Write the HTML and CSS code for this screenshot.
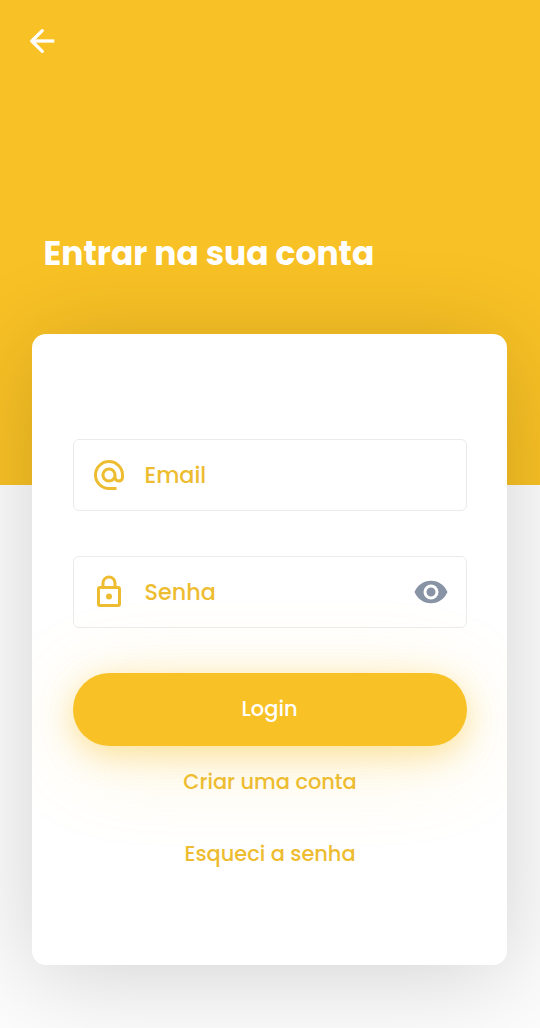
FILE: index.html
```html
<!DOCTYPE html>
<html lang="pt-BR">
<head>
<meta charset="utf-8">
<meta name="viewport" content="width=device-width, initial-scale=1">
<title>Entrar na sua conta</title>
<link rel="stylesheet" href="styles.css">
</head>
<body>
<main class="screen">
  <header class="hero">
    <button class="back" type="button" aria-label="Voltar">
      <svg class="icon" viewBox="0 0 24 24" fill="none" stroke="currentColor" stroke-width="2.2" stroke-linejoin="round"><path d="M20.2 12H5.5"/><path stroke-linecap="round" d="M12.2 5.1L5.2 12l7 6.9"/></svg>
    </button>
    <h1 class="title">Entrar na sua conta</h1>
  </header>
  <section class="card">
    <div class="field">
      <svg class="icon" viewBox="0 0 24 24" fill="currentColor"><path d="M12,15C12.81,15 13.5,14.7 14.11,14.11C14.7,13.5 15,12.81 15,12C15,11.19 14.7,10.5 14.11,9.89C13.5,9.3 12.81,9 12,9C11.19,9 10.5,9.3 9.89,9.89C9.3,10.5 9,11.19 9,12C9,12.81 9.3,13.5 9.89,14.11C10.5,14.7 11.19,15 12,15M12,2C14.75,2 17.1,3 19.05,4.95C21,6.9 22,9.25 22,12V13.45C22,14.45 21.65,15.3 21,16C20.3,16.67 19.5,17 18.5,17C17.3,17 16.31,16.5 15.56,15.5C14.56,16.5 13.38,17 12,17C10.63,17 9.45,16.5 8.46,15.54C7.5,14.55 7,13.38 7,12C7,10.63 7.5,9.45 8.46,8.46C9.45,7.5 10.63,7 12,7C13.37,7 14.55,7.5 15.54,8.46C16.5,9.45 17,10.63 17,12V13.45C17,13.86 17.16,14.22 17.46,14.53C17.76,14.84 18.11,15 18.5,15C18.92,15 19.27,14.84 19.57,14.53C19.87,14.22 20,13.86 20,13.45V12C20,9.81 19.23,7.93 17.65,6.35C16.07,4.77 14.19,4 12,4C9.81,4 7.93,4.77 6.35,6.35C4.77,7.93 4,9.81 4,12C4,14.19 4.77,16.07 6.35,17.65C7.93,19.23 9.81,20 12,20H17V22H12C9.25,22 6.9,21 4.95,19.05C3,17.1 2,14.75 2,12C2,9.25 3,6.9 4.95,4.95C6.9,3 9.25,2 12,2Z"/></svg>
      <span class="label">Email</span>
    </div>
    <div class="field">
      <svg class="icon" viewBox="0 0 24 24" fill="currentColor"><path d="M12 17a2 2 0 1 0 0-4 2 2 0 0 0 0 4zm6-9h-1V6A5 5 0 0 0 7 6v2H6a2 2 0 0 0-2 2v10a2 2 0 0 0 2 2h12a2 2 0 0 0 2-2V10a2 2 0 0 0-2-2zM9 6a3 3 0 0 1 6 0v2H9V6zm9 14H6V10h12v10z"/></svg>
      <span class="label">Senha</span>
      <svg class="icon eye" viewBox="0 0 24 24" fill="currentColor"><path d="M12 4.5C7 4.5 2.73 7.61 1 12c1.73 4.39 6 7.5 11 7.5s9.27-3.11 11-7.5c-1.73-4.39-6-7.5-11-7.5zM12 17a5 5 0 1 1 0-10 5 5 0 0 1 0 10zm0-8a3 3 0 1 0 0 6 3 3 0 0 0 0-6z"/></svg>
    </div>
    <button class="login" type="button">Login</button>
    <a class="link">Criar uma conta</a>
    <a class="link">Esqueci a senha</a>
  </section>
</main>
</body>
</html>
```
FILE: styles.css
```css
* { box-sizing: border-box; }
body {
  margin: 0;
  font-family: Poppins, Inter, "Open Sans", sans-serif;
}
button { font: inherit; border: 0; padding: 0; background: none; color: inherit; }
.screen { height: 1028px; overflow: hidden; background: #fcfcfc; }
.icon { display: block; width: 36px; height: 36px; flex: none; }
.hero { height: 485px; background: #f8c125; color: #fff; padding: 23px 24px 0; }
.back { display: block; }
.title {
  margin: 171px 0 0 19.5px;
  font-size: 32.9px;
  line-height: 48px;
  font-weight: 700;
  white-space: nowrap;
}
.card {
  position: relative;
  width: 475px;
  height: 631px;
  margin: -151px 0 0 32px;
  padding: 105px 40px 0 41px;
  display: flex;
  flex-direction: column;
  overflow: hidden;
  border-radius: 14px;
  background: #fff;
  box-shadow: 0 10px 96px rgba(0, 0, 0, 0.17);
}
.field {
  height: 72px;
  margin-bottom: 45px;
  padding: 2px 17px 0 16.5px;
  display: flex;
  align-items: center;
  gap: 18px;
  border: 1.5px solid #ebebed;
  border-radius: 6px;
  color: #edbc30;
}
.field .icon { margin-top: -2px; }
.label { font-size: 22.3px; line-height: 32px; font-weight: 500; }
.eye { margin-left: auto; color: #8993a6; }
.login {
  height: 73px;
  flex: none;
  padding-bottom: 2px;
  border-radius: 37px;
  background: #f8c125;
  color: #fff;
  font-size: 21px;
  font-weight: 500;
  text-align: center;
  text-indent: -1px;
  box-shadow: 0 8px 32px rgba(248, 193, 37, 0.42), 0 14px 90px rgba(248, 193, 37, 0.2);
}
.link {
  height: 72px;
  line-height: 72px;
  text-align: center;
  color: #edbc30;
  font-size: 20.9px;
  font-weight: 500;
}
```
